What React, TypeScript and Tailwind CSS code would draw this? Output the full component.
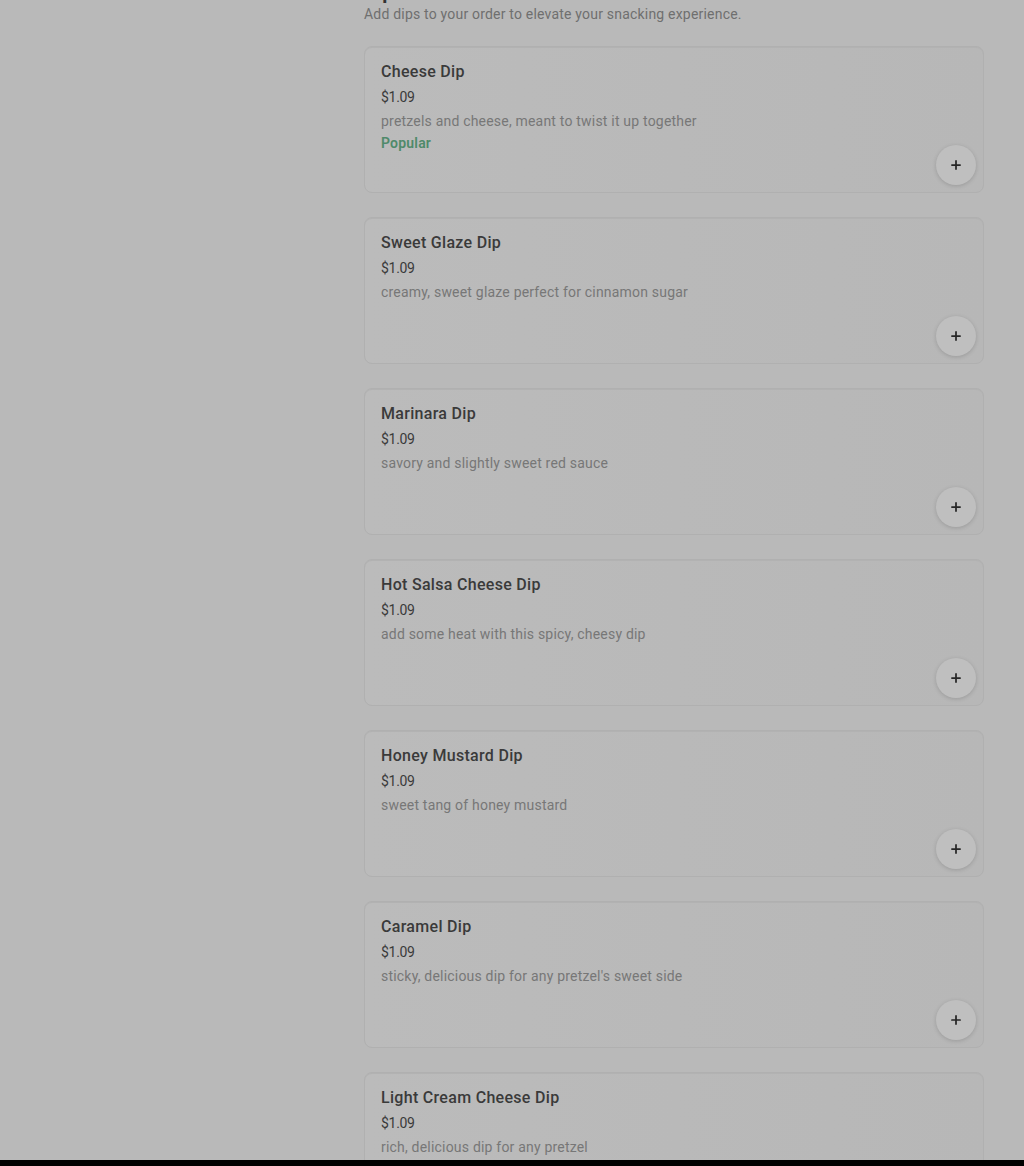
import { Plus } from 'lucide-react';

const dips = [
  { name: 'Cheese Dip', desc: 'pretzels and cheese, meant to twist it up together', popular: true },
  { name: 'Sweet Glaze Dip', desc: 'creamy, sweet glaze perfect for cinnamon sugar' },
  { name: 'Marinara Dip', desc: 'savory and slightly sweet red sauce' },
  { name: 'Hot Salsa Cheese Dip', desc: 'add some heat with this spicy, cheesy dip' },
  { name: 'Honey Mustard Dip', desc: 'sweet tang of honey mustard' },
  { name: 'Caramel Dip', desc: "sticky, delicious dip for any pretzel's sweet side" },
  { name: 'Light Cream Cheese Dip', desc: 'rich, delicious dip for any pretzel' },
];

function DipCard({ name, desc, popular }: { name: string; desc: string; popular?: boolean }) {
  return (
    <div className="relative h-[147px] rounded-lg border border-[#b0b0b0] bg-gradient-to-r from-[#bbbbbb] to-[#b7b7b7] px-4 pt-[13px] shadow-[inset_0_1px_0_#b2b2b2]">
      <div className="text-base leading-6 font-medium tracking-[0.3px] text-[#3a3a3a]">{name}</div>
      <div className="mt-px text-sm leading-6 tracking-[-0.3px] text-[#3a3a3a]">$1.09</div>
      <div className="text-sm leading-6 tracking-[0.2px] text-[#777777]">{desc}</div>
      {popular && <div className="-mt-0.5 text-sm leading-6 font-semibold tracking-[0.2px] text-[#4f8a6a]">Popular</div>}
      <button className="absolute right-[7px] bottom-[7px] flex h-[40px] w-[40px] items-center justify-center rounded-full bg-[#bfbfbf] shadow-[0_1px_4px_rgba(0,0,0,0.16)]">
        <Plus size={14} strokeWidth={3} className="text-[#262626]" />
      </button>
    </div>
  );
}

export default function App() {
  return (
    <div className="relative h-[1166px] overflow-hidden bg-[#b9b9b9] font-['Roboto',sans-serif]">
      <div className="ml-[364px] w-[620px]">
        <div className="-mt-[22px] text-xl leading-7 font-bold text-[#333333]">Dips</div>
        <div className="-mt-0.5 text-sm leading-5 tracking-[0.2px] text-[#6f6f6f]">Add dips to your order to elevate your snacking experience.</div>
        <div className="mt-[22px] flex flex-col gap-6">
          {dips.map((d) => (
            <DipCard key={d.name} {...d} />
          ))}
        </div>
      </div>
      <div className="absolute inset-x-0 bottom-0 h-[6px] bg-black" />
    </div>
  );
}
